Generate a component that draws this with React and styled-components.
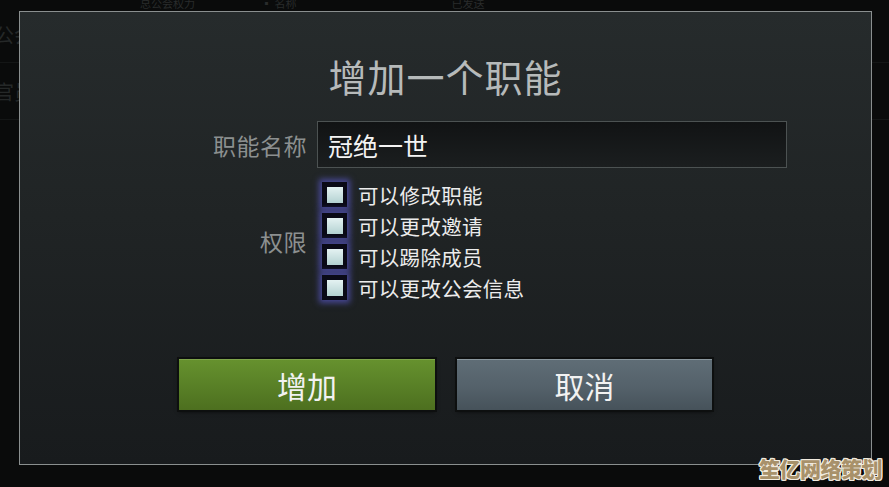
import styled, { createGlobalStyle } from 'styled-components';

const GlobalStyle = createGlobalStyle`
  html, body {
    margin: 0;
    padding: 0;
    background: #0b0c0c;
  }
  body {
    font-family: "Noto Sans CJK SC", "Noto Sans", sans-serif;
    width: 889px;
    height: 487px;
    overflow: hidden;
  }
`;

const Screen = styled.div`
  position: relative;
  width: 889px;
  height: 487px;
  overflow: hidden;
  background: #0a0b0b;
`;

// faint page behind the dialog
const BackHeader = styled.div`
  display: flex;
  height: 10px;
  margin-top: -4px;
  padding-left: 140px;
  color: #292c2c;
  font-size: 11px;
  line-height: 14px;
`;

const BackHeaderCell = styled.span`
  margin-left: ${p => p.$offset || 0}px;
`;

const BackRows = styled.div`
  display: flex;
  flex-direction: column;
  margin-left: -6px;
`;

const BackRow = styled.div`
  height: 56px;
  display: flex;
  align-items: center;
  color: #252828;
  font-size: 20px;
  border-bottom: 1px solid #141616;
`;

const Dialog = styled.div`
  position: absolute;
  left: 19px;
  top: 11px;
  width: 853px;
  height: 454px;
  box-sizing: border-box;
  border: 1px solid #8a8f8f;
  background: linear-gradient(180deg, #262b2c 0%, #202425 45%, #181b1d 100%);
  display: flex;
  flex-direction: column;
  align-items: stretch;
  padding-top: 42px;
`;

const Title = styled.h1`
  margin: 0;
  text-align: center;
  font-weight: 400;
  font-size: 38px;
  line-height: 44px;
  color: #b6baba;
  letter-spacing: 1px;
`;

const Form = styled.div`
  display: grid;
  grid-template-columns: 287px 470px;
  column-gap: 10px;
  row-gap: 11px;
  margin-top: 23px;
  align-items: center;
`;

const Label = styled.div`
  text-align: right;
  font-size: 23px;
  line-height: 30px;
  color: #8c9090;
  letter-spacing: 0.5px;
`;

const NameInput = styled.div`
  height: 47px;
  box-sizing: border-box;
  border: 1px solid #4c5252;
  background: linear-gradient(180deg, #111314 0%, #1b1e1f 100%);
  display: flex;
  align-items: center;
  padding-left: 10px;
  font-size: 25px;
  color: #f4f4f4;
`;

const PermList = styled.div`
  display: flex;
  flex-direction: column;
`;

const PermRow = styled.div`
  height: 31px;
  display: flex;
  align-items: center;
  gap: 11px;
  padding-left: 5px;
`;

const Box = styled.span`
  width: 25px;
  height: 25px;
  box-sizing: border-box;
  background: #0a0a16;
  border: 4px solid #0a0a16;
  box-shadow: 0 0 6px 3px rgba(78, 78, 168, 0.85);
  display: flex;
  align-items: center;
  justify-content: center;
  &::after {
    content: '';
    width: 16px;
    height: 16px;
    background: linear-gradient(180deg, #e4f2f2 0%, #b4d2d2 100%);
  }
`;

const PermText = styled.span`
  font-size: 20.5px;
  color: #ececec;
  line-height: 28px;
  letter-spacing: 0.3px;
`;

const Buttons = styled.div`
  display: flex;
  justify-content: center;
  gap: 22px;
  margin-top: 56px;
`;

const Button = styled.div`
  width: ${p => p.$w}px;
  height: 51px;
  box-sizing: border-box;
  display: flex;
  align-items: center;
  justify-content: center;
  font-size: 30px;
  color: #f2f2f2;
  border-top: 1px solid ${p => (p.$primary ? '#7ea44a' : '#8a979e')};
  background: ${p =>
    p.$primary
      ? 'linear-gradient(180deg, #66912e 0%, #587f26 55%, #4d6f1f 100%)'
      : 'linear-gradient(180deg, #5f6d76 0%, #54616a 55%, #46525a 100%)'};
  box-shadow: 0 0 0 2px #0d0f0f, 0 2px 4px rgba(0, 0, 0, 0.6);
`;

const Watermark = styled.div`
  position: absolute;
  right: 7px;
  bottom: 4px;
  font-size: 21px;
  font-weight: 900;
  letter-spacing: -0.5px;
  color: #a8916a;
  text-shadow:
    1px 0 0 #f2ece0, -1px 0 0 #f2ece0, 0 1px 0 #f2ece0, 0 -1px 0 #f2ece0,
    1px 1px 0 #f2ece0, -1px -1px 0 #f2ece0, 1px -1px 0 #f2ece0, -1px 1px 0 #f2ece0;
`;

const perms = ['可以修改职能', '可以更改邀请', '可以踢除成员', '可以更改公会信息'];

export default function App() {
  return (
    <Screen>
      <GlobalStyle />
      <BackHeader>
        <BackHeaderCell>总公会权力</BackHeaderCell>
        <BackHeaderCell $offset={66}>▪ 名称</BackHeaderCell>
        <BackHeaderCell $offset={155}>已发送</BackHeaderCell>
      </BackHeader>
      <BackRows>
        <BackRow>公会</BackRow>
        <BackRow>官员</BackRow>
      </BackRows>

      <Dialog>
        <Title>增加一个职能</Title>
        <Form>
          <Label>职能名称</Label>
          <NameInput>冠绝一世</NameInput>
          <Label>权限</Label>
          <PermList>
            {perms.map(p => (
              <PermRow key={p}>
                <Box />
                <PermText>{p}</PermText>
              </PermRow>
            ))}
          </PermList>
        </Form>
        <Buttons>
          <Button $primary $w={256}>增加</Button>
          <Button $w={255}>取消</Button>
        </Buttons>
      </Dialog>

      <Watermark>笙亿网络策划</Watermark>
    </Screen>
  );
}
